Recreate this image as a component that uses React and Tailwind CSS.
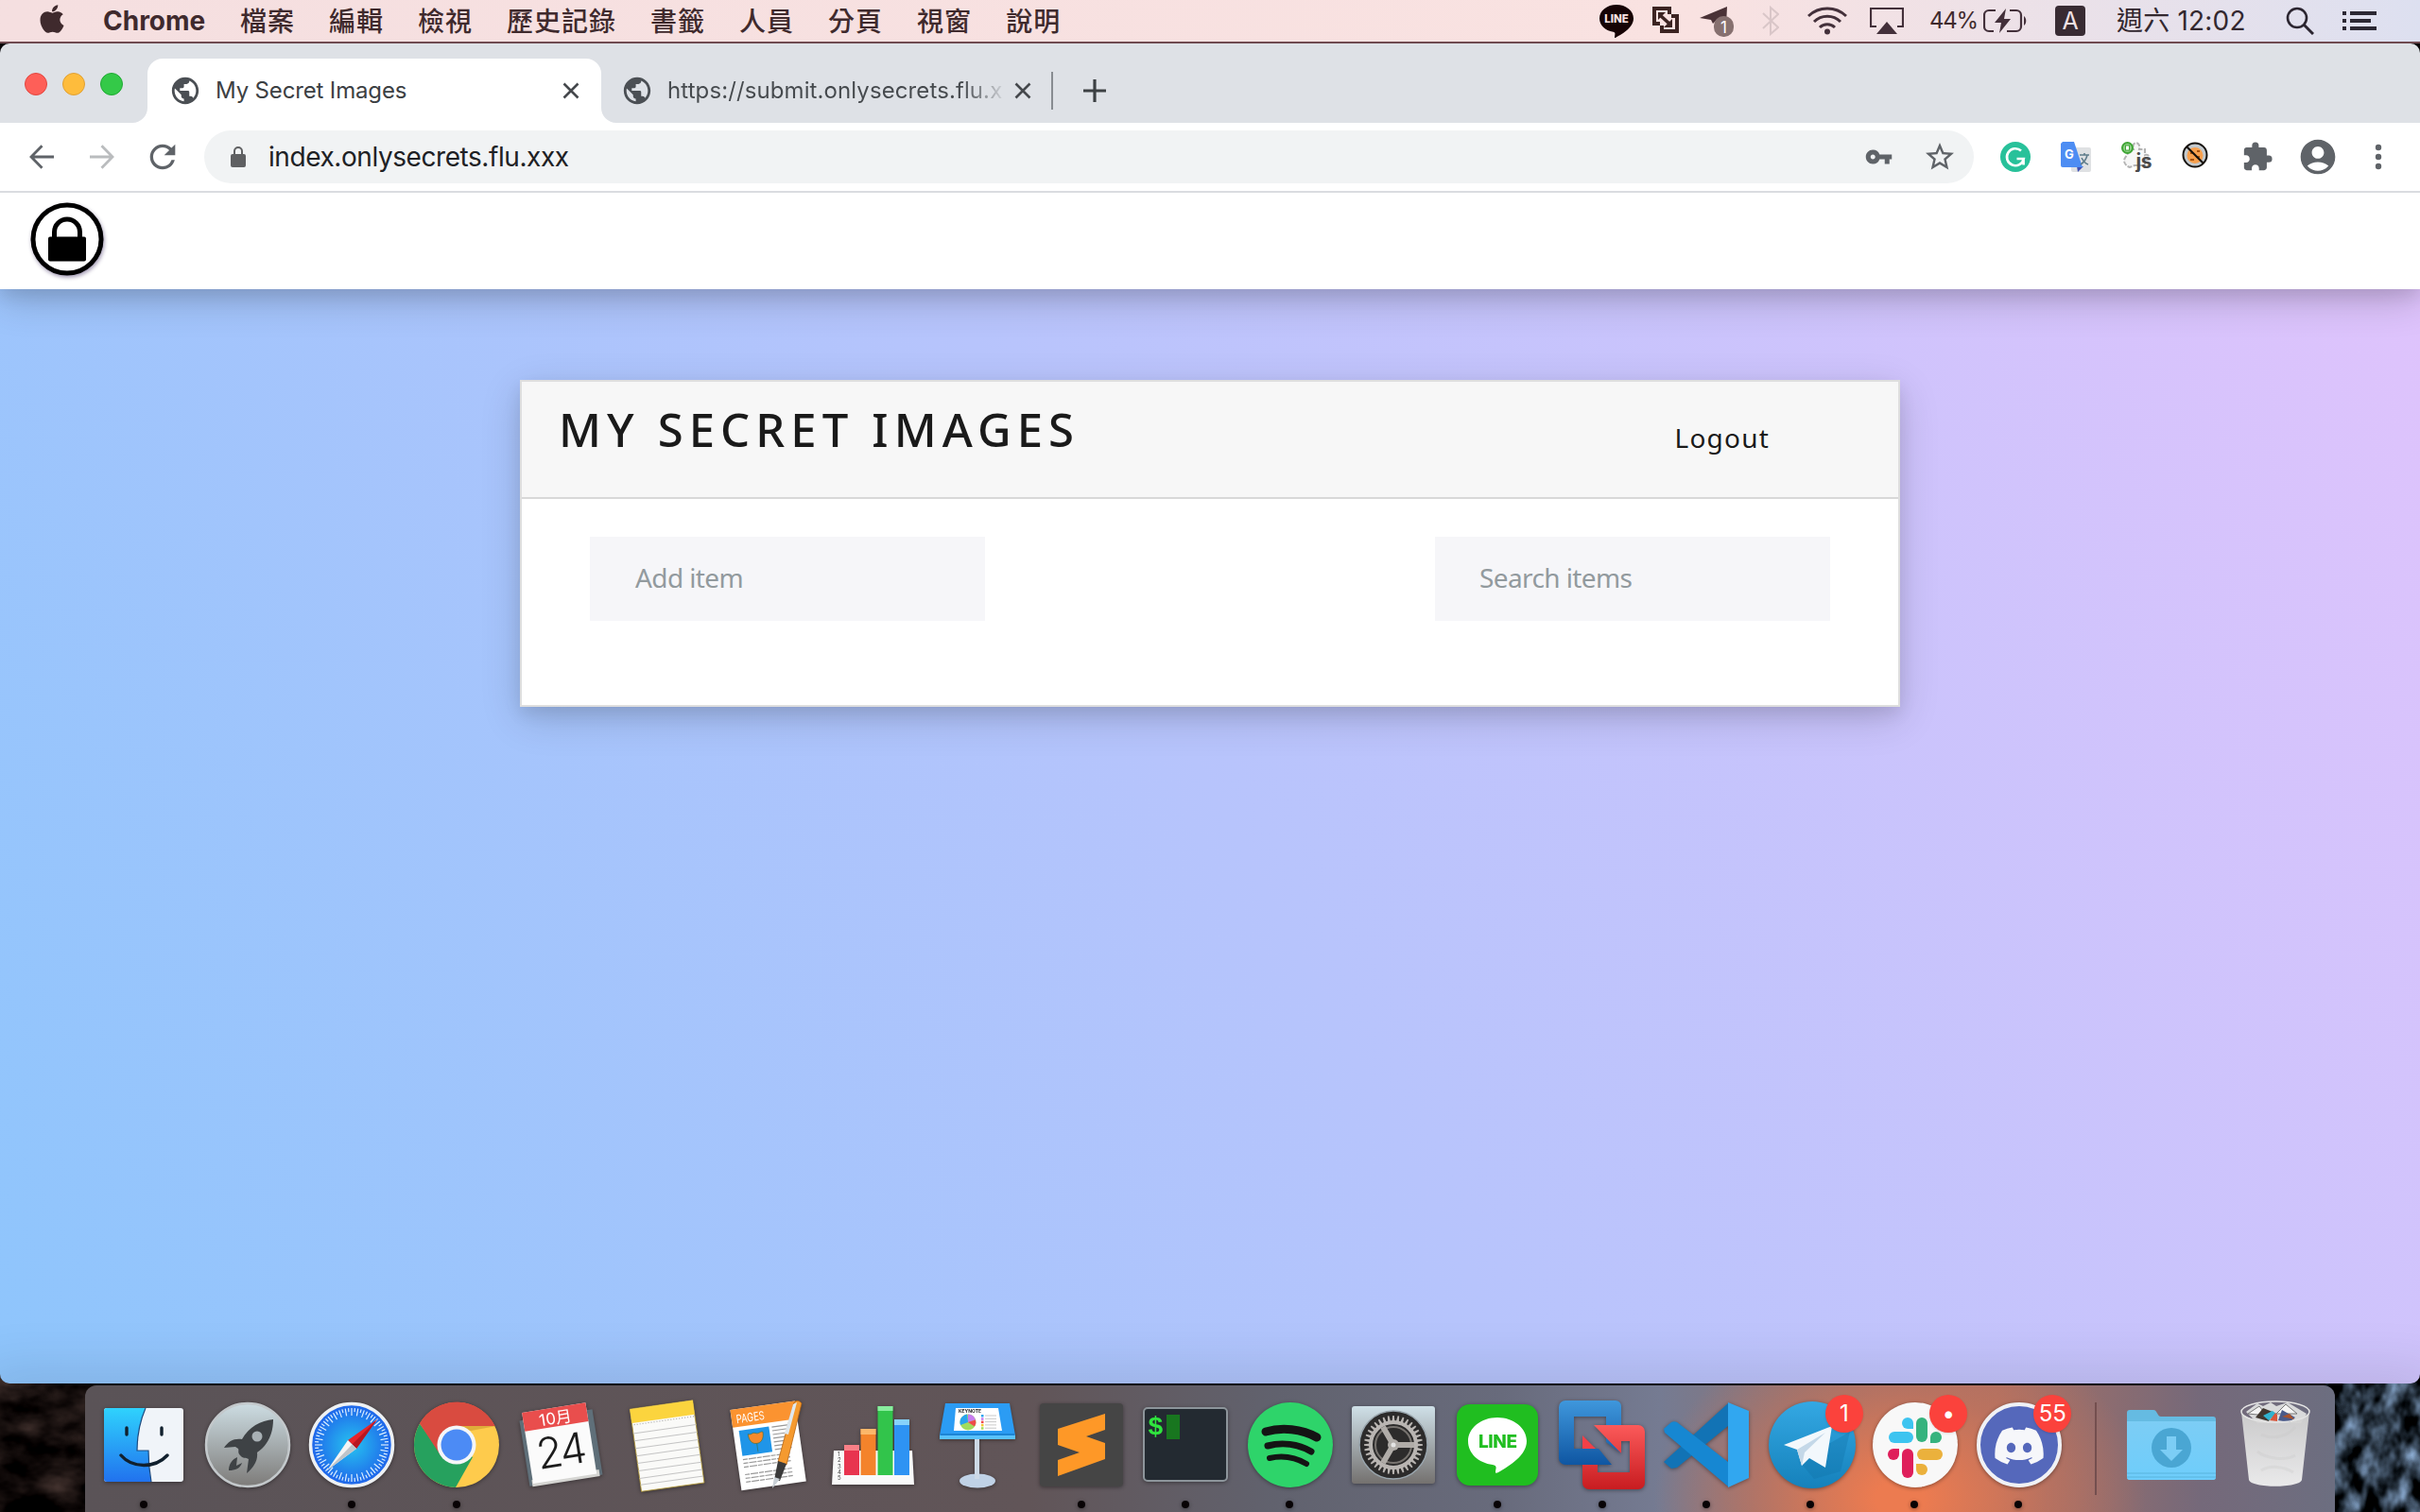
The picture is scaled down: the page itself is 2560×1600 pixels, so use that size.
import React from "react";
import { MdPublic, MdVpnKey, MdStarBorder, MdExtension, MdAccountCircle, MdRefresh } from "react-icons/md";
import { FaApple, FaDiscord } from "react-icons/fa";

const menus = ["檔案", "編輯", "檢視", "歷史記錄", "書籤", "人員", "分頁", "視窗", "說明"];

function MenuBar() {
  return (
    <header className="flex h-[46px] w-full items-center border-b-2 border-[#6f4a50] bg-gradient-to-r from-[#f5dfe0] via-[#f9e2e1] via-70% to-[#dde0f0] text-[28px] leading-none text-[#3f2a2d]">
      <div className="flex w-[109px] items-center pl-[40px]">
        <FaApple className="mb-[4px] h-[34px] w-[30px]" />
      </div>
      <span className="w-[145px] text-[28px] font-bold tracking-[0px]">Chrome</span>
      <nav className="flex gap-[36px] pt-[1px] font-medium tracking-[1px]">
        {menus.map((m) => (
          <span key={m}>{m}</span>
        ))}
      </nav>
      <div className="ml-auto flex h-full items-center">
        <svg width="36" height="36" viewBox="0 0 36 36" className="mr-[20px]">
          <path d="M18 1C8 1 0 7.300 0 15.500c0 7 6 13 14.500 14.200 1.500.3 2 1 1.900 2.200l-.4 3.600c0 .6.4.7 1 .4C22 33 36 26 36 15.500 36 7.300 28 1 18 1z" fill="#160304" />
          <text x="18" y="20" textAnchor="middle" fontSize="11.500" fontWeight="800" fill="#f9e2e1">LINE</text>
        </svg>
        <svg width="28" height="30" viewBox="0 0 28 30" className="mr-[22px]" fill="none" stroke="#3c2422" strokeWidth="4">
          <path d="M8 18H2V2h16v6" />
          <path d="M20 10h6v16H10v-6" />
          <path d="M8 9l11 10" strokeWidth="3.600" />
          <path d="M21 13v9h-9z" fill="#3c2422" stroke="none" />
          <path d="M6 6h8l-8 8z" fill="#3c2422" stroke="none" />
        </svg>
        <svg width="36" height="34" viewBox="0 0 36 34" className="mr-[30px]">
          <path d="M0 14L29 2l-1 20-10-6-4 4-2-4z" fill="#4a3236" />
          <rect x="15" y="12" width="21" height="22" rx="10" fill="#86706f" />
          <text x="25.500" y="29.500" textAnchor="middle" fontSize="17" fill="#fff">1</text>
        </svg>
        <svg width="18" height="32" viewBox="0 0 18 32" className="mr-[30px]" fill="none" stroke="#d9c6c8" strokeWidth="2">
          <path d="M1 8l16 15-8 7V2l8 7L1 24" />
        </svg>
        <svg width="42" height="30" viewBox="0 0 42 30" className="mr-[24px]" fill="none" stroke="#43303a" strokeWidth="3">
          <path d="M1 10a29 29 0 0 1 40 0M7 16a20 20 0 0 1 28 0M13 22a11.500 11.500 0 0 1 16 0" />
          <circle cx="21" cy="26.500" r="3" fill="#43303a" stroke="none" />
        </svg>
        <svg width="36" height="29" viewBox="0 0 36 29" className="mr-[27px]">
          <path d="M7 20H1V1h34v19h-6" fill="none" stroke="#43303a" strokeWidth="2.200" />
          <path d="M18 15l11 13H7z" fill="#43303a" />
        </svg>
        <span className="w-[57px] text-[24px] tracking-[-1.2px]">44%</span>
        <svg width="47" height="26" viewBox="0 0 47 26" className="mr-[29px]" fill="none" stroke="#43303a" strokeWidth="2.200">
          <path d="M13 2H6a5 5 0 0 0-5 5v12a5 5 0 0 0 5 5h5M28 2h7a5 5 0 0 1 5 5v12a5 5 0 0 1-5 5H25" />
          <path d="M43 8c3 2 3 8 0 10z" fill="#43303a" stroke="none" />
          <path d="M24 0L12 15h7l-2 11 12-15h-7z" fill="#43303a" stroke="none" />
        </svg>
        <span className="mr-[33px] flex h-[32px] w-[32px] items-center justify-center rounded-[4px] bg-[#382b33] text-[25px] text-[#f1e1e4]">A</span>
        <span className="w-[179px] whitespace-nowrap text-[28px] tracking-[0.2px] text-[#33282f]">週六 12:02</span>
        <svg width="30" height="30" viewBox="0 0 30 30" className="mr-[30px]" fill="none" stroke="#2b2530" strokeWidth="2.600">
          <circle cx="12" cy="12" r="10" />
          <path d="M19 19l10 10" strokeWidth="3" />
        </svg>
        <svg width="36" height="22" viewBox="0 0 36 22" className="mr-[46px]" fill="#2b2833">
          <path d="M0 1h4v4H0zM0 9h4v4H0zM0 17h4v4H0zM8 1h28v4H8zM8 9h22v4H8zM8 17h28v4H8z" />
        </svg>
      </div>
    </header>
  );
}

function Close() {
  return (
    <svg width="18" height="18" viewBox="0 0 18 18" stroke="#45484c" strokeWidth="2.600" className="shrink-0">
      <path d="M1.500 1.500l15 15M16.500 1.500l-15 15" />
    </svg>
  );
}

function Globe() {
  return <MdPublic className="-ml-[3px] h-[34px] w-[34px] shrink-0 text-[#4b4f54]" />;
}

function TabStrip() {
  return (
    <div className="flex h-[84px] items-end bg-[#dee1e6] text-[24px]">
      <div className="flex h-full w-[156px] shrink-0 items-start gap-[16px] pl-[26px] pt-[31px]">
        <i className="h-[24px] w-[24px] rounded-full border border-[#e2463f] bg-[#fe5f58]" />
        <i className="h-[24px] w-[24px] rounded-full border border-[#dfa034] bg-[#febc3c]" />
        <i className="h-[24px] w-[24px] rounded-full border border-[#1faa33] bg-[#34c948]" />
      </div>
      <svg width="16" height="16" className="-ml-[16px] shrink-0"><path d="M16 0v16H0A16 16 0 0 0 16 0z" fill="#fff" /></svg>
      <div className="flex h-[68px] w-[480px] items-center rounded-t-[16px] bg-white pl-[26px] pr-[23px]">
        <Globe />
        <span className="ml-[15px] flex-1 tracking-[-0.15px] text-[#3c4043]">My Secret Images</span>
        <Close />
      </div>
      <svg width="16" height="16" className="shrink-0"><path d="M0 0v16h16A16 16 0 0 1 0 0z" fill="#fff" /></svg>
      <div className="flex h-[68px] w-[460px] items-center pl-[8px] pr-[21px]">
        <Globe />
        <span className="ml-[15px] w-[354px] overflow-hidden whitespace-nowrap bg-gradient-to-r from-[#45494d] from-[88%] to-[#45494d20] bg-clip-text tracking-[0.100px] text-transparent">
          https://submit.onlysecrets.flu.xxx
        </span>
        <span className="ml-auto flex"><Close /></span>
      </div>
      <div className="flex h-[68px] items-center">
        <i className="h-[40px] w-[2px] bg-[#888c91]" />
        <svg width="24" height="24" viewBox="0 0 24 24" className="ml-[32px]" stroke="#3c4043" strokeWidth="3.200"><path d="M12 0v24M0 12h24" /></svg>
      </div>
    </div>
  );
}

function Toolbar() {
  return (
    <div className="flex h-[74px] items-center border-b-2 border-[#dadce0] bg-white text-[#5f6368]">
      <svg width="26" height="26" viewBox="0 0 26 26" className="ml-[31px]" fill="none" stroke="#5f6368" strokeWidth="2.800"><path d="M26 13H2M13.500 1.200L2 13l11.500 11.800" /></svg>
      <svg width="26" height="26" viewBox="0 0 26 26" className="ml-[38px]" fill="none" stroke="#babcbe" strokeWidth="2.800"><path d="M0 13h24M12.500 1.200L24 13 12.500 24.800" /></svg>
      <MdRefresh className="ml-[31px] h-[40px] w-[40px] text-[#5f6368]" />
      <div className="ml-[24px] flex h-[56px] w-[1872px] items-center rounded-full bg-[#f1f3f4] pl-[28px] pr-[18px]">
        <svg width="16" height="22" viewBox="0 0 16 22"><rect y="8" width="16" height="14" rx="2" fill="#5f6062" /><path d="M4 9V5a4 4 0 0 1 8 0v4" fill="none" stroke="#5f6062" strokeWidth="2" /></svg>
        <span className="ml-[24px] flex-1 text-[28px] tracking-[-0.430px] text-[#202124]">index.onlysecrets.flu.xxx</span>
        <MdVpnKey className="h-[30px] w-[31px]" />
        <MdStarBorder className="ml-[31px] h-[36px] w-[36px]" />
      </div>
      <svg width="32" height="32" viewBox="0 0 32 32" className="ml-[28px]">
        <circle cx="16" cy="16" r="16" fill="#28c19a" />
        <path d="M22 9.500a9 9 0 1 0 2.800 8.500H17.500M24.600 18v6.500" fill="none" stroke="#fff" strokeWidth="2.600" />
      </svg>
      <svg width="33" height="32" viewBox="0 0 33 32" className="ml-[32px]">
        <rect x="11" y="6" width="21" height="26" rx="2" fill="#dfe1e3" />
        <path d="M17 26h7l-6 6z" fill="#3f51b5" />
        <path d="M2 0h12l9 27H2a2 2 0 0 1-2-2V2z" fill="#4d8df3" />
        <text x="4" y="18" fontSize="13" fontWeight="700" fill="#fff">G</text>
        <path d="M20 14h10M25 12v2M28 14c-1 5-4 8-7 10M22 17c2 4 4 6 7 7" fill="none" stroke="#607d8b" strokeWidth="1.600" />
      </svg>
      <svg width="33" height="32" viewBox="0 0 33 32" className="ml-[31px]">
        <path d="M9 8h4c-3-9 8-9 6 0h6v6c6-2 6 7 0 5v6H14l-5 2c-6-2-7-7-5-10l2-3z" fill="#f7f7f7" stroke="#b4b4b4" strokeWidth="2" strokeDasharray="5 1.500" />
        <circle cx="6.500" cy="6.500" r="5.500" fill="#8fd086" stroke="#3fa535" strokeWidth="2" />
        <rect x="4.500" y="4" width="4" height="5" fill="#fff" stroke="#3fa535" />
        <text x="15.500" y="28" fontSize="21" fontWeight="700" fill="#4a4a4a" textLength="17">js</text>
      </svg>
      <svg width="28" height="28" viewBox="0 0 28 28" className="mb-[4px] ml-[31px]">
        <circle cx="14" cy="14" r="12.500" fill="#c4cace" stroke="#16110c" strokeWidth="2" />
        <circle cx="14" cy="14.500" r="8.500" fill="#f7a04e" />
        <path d="M9 12h3M16 10h3M9 19h4M15 16h4" stroke="#a9520c" strokeWidth="2" />
        <path d="M5 5l18 18" stroke="#16110c" strokeWidth="2.200" />
      </svg>
      <MdExtension className="ml-[35px] h-[34px] w-[34px]" />
      <MdAccountCircle className="ml-[25px] h-[44px] w-[44px]" />
      <svg width="8" height="28" viewBox="0 0 8 28" className="ml-[38px]" fill="#5f6368"><circle cx="4" cy="4" r="3.200" /><circle cx="4" cy="14" r="3.200" /><circle cx="4" cy="24" r="3.200" /></svg>
    </div>
  );
}

function Page() {
  return (
    <main className="relative flex h-[1260px] flex-col overflow-hidden bg-[linear-gradient(62deg,#8ec5fc_0%,#e0c3fc_100%)] font-['Noto_Sans',sans-serif]">
      <div className="flex h-[102px] shrink-0 items-center bg-white pl-[30px] shadow-[0_8px_16px_0_rgba(0,0,0,0.08),0_12px_40px_0_rgba(0,0,0,0.19)]">
        <svg width="82" height="82" viewBox="0 0 82 82" className="mt-[-5px] drop-shadow-[1px_2px_2px_rgba(40,20,80,0.45)]">
          <circle cx="41" cy="41" r="36" fill="#fff" stroke="#000" strokeWidth="5" />
          <path d="M27.500 42V33.500a13.500 13.500 0 0 1 27 0V42" fill="none" stroke="#000" strokeWidth="5" />
          <rect x="21" y="38.500" width="40" height="26" rx="2" fill="#000" />
        </svg>
      </div>
      <section className="mx-auto mt-[96px] h-[346px] w-[1460px] border-2 border-[#dedede] bg-white shadow-[0_8px_16px_0_rgba(0,0,0,0.08),0_12px_40px_0_rgba(0,0,0,0.16)]">
        <div className="flex h-[124px] justify-between border-b-2 border-[#d8d8d8] bg-[#f7f7f7] pl-[39px] pr-[136px] text-[#1a1a1a]">
          <h1 className="mt-[14px] text-[49px] font-medium leading-[72px] tracking-[6.100px]">MY SECRET IMAGES</h1>
          <a className="mt-[39px] text-[28px] leading-[40px] tracking-[1.200px]">Logout</a>
        </div>
        <div className="flex justify-between px-[72px] pt-[40px] text-[28px] tracking-[-0.600px] text-[#929a9e]">
          <div className="flex h-[89px] w-[418px] items-center bg-[#f6f6f9] pb-[3px] pl-[48px]">Add item</div>
          <div className="flex h-[89px] w-[418px] items-center bg-[#f6f6f9] pb-[3px] pl-[47px]">Search items</div>
        </div>
      </section>
      <footer className="mt-auto h-0 shrink-0 shadow-[0_8px_16px_0_rgba(0,0,0,0.1),0_12px_60px_20px_rgba(0,0,0,0.15)]" />
    </main>
  );
}

const ticks = Array.from({ length: 72 }, (_, i) => i * 5);
const teeth = Array.from({ length: 36 }, (_, i) => i * 10);

const apps = [
  { name: "Finder", open: true, art: (
    <>
      <rect x="13" y="24" width="84" height="78" rx="3" fill="#f0f4f9" />
      <path d="M16 24h41c-6 14-9 30-9 45h12c0 12 1 22 3 33H16a3 3 0 0 1-3-3V27a3 3 0 0 1 3-3z" fill="url(#finder)" />
      <path d="M57 24c-6 14-9 30-9 45h12c0 12 1 22 3 33" fill="none" stroke="#1d4b80" strokeWidth="1.200" />
      <path d="M37 45v7M74 45v7M31 74c12 14 36 14 49 0" fill="none" stroke="#11202e" strokeWidth="3.400" strokeLinecap="round" />
    </>) },
  { name: "Launchpad", art: (
    <>
      <circle cx="55" cy="63" r="44" fill="url(#launch)" stroke="#c3c8cb" strokeWidth="2.500" />
      <path d="M82 36c-13 1-26 8-33 21-9-1-14 2-19 9l12-1 3 2c1 2-1 4 2 7 3 4 6 2 9 4l-2 15c7-6 12-13 11-22C78 62 82 49 82 36z" fill="#3e4245" />
      <circle cx="65" cy="54" r="5.500" fill="#a8b0b4" />
      <path d="M44 76c-5 2-9 7-9 14 7 0 12-2 14-8l-6 3z" fill="#3e4245" />
    </>) },
  { name: "Safari", open: true, art: (
    <>
      <circle cx="55" cy="63" r="43.500" fill="url(#safari)" stroke="#eef1f3" strokeWidth="3.500" />
      {ticks.map((a) => <path key={a} d={a % 10 ? "M55 24v4" : "M55 24v8"} transform={`rotate(${a} 55 63)`} stroke="#dcefff" strokeWidth="1.200" />)}
      <path d="M82 36L51 58l9 9z" fill="#e5252b" /><path d="M82 36L60 67l-4.500-4.500z" fill="#b81620" />
      <path d="M29 90l22-32 9 9z" fill="#f4f4f4" /><path d="M29 90l31-23-4.500-4.500z" fill="#bfc4c9" />
    </>) },
  { name: "Chrome", open: true, art: (
    <>
      <circle cx="55" cy="63" r="45" fill="#fecb4c" />
      <path d="M55 63L16 40.500A45 45 0 0 1 95.500 43H55z" fill="#d94b40" />
      <path d="M16 40.500A45 45 0 0 0 54 108l18-32-17-13-17 8z" fill="#26a15e" />
      <path d="M16 40.500L38 74l2-20 15-11h40.500A45 45 0 0 0 16 40.500z" fill="#d94b40" />
      <path d="M70 48l27-5H55z" fill="#c99a2e" opacity=".6" />
      <circle cx="55" cy="63" r="20.500" fill="#f5f6f8" /><circle cx="55" cy="63" r="16.500" fill="#4c8bf5" />
    </>) },
  { name: "Calendar", art: (
    <g transform="rotate(-9 55 63)">
      <path d="M16 31h78v70H16z" fill="#5f6f79" /><path d="M19 95h72v7H19z" fill="#d5d5d2" />
      <rect x="20" y="23" width="68" height="76" fill="#fbfbfb" /><path d="M20 23h68v20H20z" fill="#e94e4d" />
      <text x="54" y="40" textAnchor="middle" fontSize="17" fill="#fff">10月</text>
      <text x="54" y="85" textAnchor="middle" fontSize="45" fontWeight="300" letterSpacing="-2" fill="#1c1c1c">24</text>
    </g>) },
  { name: "Notes", art: (
    <g transform="translate(3 0) rotate(-8 55 63)">
      <rect x="21" y="20" width="67" height="88" fill="#fafaf8" stroke="#b59b37" strokeWidth=".8" />
      <path d="M21 20h67v15H21z" fill="#fbd43e" />
      <path d="M23 37h64" stroke="#999" strokeDasharray="1 2" />
      {[46, 54, 62, 70, 78, 86, 94, 101].map((y) => <path key={y} d={`M21 ${y}h67`} stroke="#c4c4c4" />)}
    </g>) },
  { name: "Pages", art: (
    <g transform="translate(1 0)">
      <g transform="rotate(-8 52 63)">
        <rect x="19" y="21" width="69" height="86" fill="#fff" /><path d="M19 21h69v19H19z" fill="#fb9330" />
        <text x="24" y="36" fontSize="12.500" fill="#fff" textLength="30" lengthAdjust="spacingAndGlyphs">PAGES</text>
        <rect x="25" y="44" width="32" height="27" fill="#1f95e8" />
        <path d="M34 49c3 2 5-2 8 0s6-2 8 0c0 8-4 11-8 11-5 0-8-4-8-11zM42 60v9" fill="#f58a2c" stroke="#3b6d42" strokeWidth=".6" />
        {[45, 49, 53, 57, 61, 65, 69].map((y) => <path key={y} d={`M60 ${y}h18`} stroke="#999" strokeWidth="1.200" />)}
        {[75, 79, 83, 91, 95, 99].map((y) => <path key={y} d={`M25 ${y}h50`} stroke="#999" strokeWidth="1.200" strokeDasharray="5 1 8 1" />)}
      </g>
      <path d="M81 18q4-4 8 1L73 84l-9-3z" fill="#f59a2f" stroke="#b86511" strokeWidth=".8" />
      <path d="M80 20l4-2-9 34-4-1z" fill="#dfe8ef" /><path d="M64 80l9 3-7 18-6-1z" fill="#3a3a3a" /><path d="M60 97l6 2-8 10z" fill="#c9d0d6" />
    </g>) },
  { name: "Numbers", art: (
    <g transform="translate(1 0)">
      <path d="M13 69h83l2 36H11z" fill="#f9f9f9" />
      {[1, 2, 3, 4, 5].map((n, i) => <text key={n} x="17" y={75 + i * 6.300} fontSize="6" fill="#444">{n}</text>)}
      <path d="M24 63h16v32H24z" fill="#e8344f" /><path d="M24 63h16v6H24z" fill="#f98087" />
      <path d="M41.500 46h16v49h-16z" fill="#f4832b" /><path d="M41.500 46h16v6h-16z" fill="#fcb76a" />
      <path d="M59.500 22h16v73h-16z" fill="#32c44b" /><path d="M59.500 22h16v5h-16z" fill="#88ee9e" />
      <path d="M77 36h16v59H77z" fill="#2e93f3" /><path d="M77 36h16v6H77z" fill="#87d2fb" />
    </g>) },
  { name: "Keynote", art: (
    <g transform="translate(-1 0)">
      <ellipse cx="56" cy="101" rx="19" ry="7.500" fill="#c0d2e6" /><path d="M53 54h5v45h-5z" fill="#cdd9e6" />
      <path d="M22 19h68l6 34H16z" fill="#2b9cf4" /><path d="M16 53h80v4H16z" fill="#59c2fb" /><path d="M17 52h78" stroke="#0e6db5" />
      <path d="M33 24h45l4 24H31z" fill="#fff" />
      <text x="36" y="29" fontSize="5" fontWeight="700" fill="#222" textLength="24">KEYNOTE</text>
      <circle cx="46" cy="39" r="8.500" fill="#a2dc5d" /><path d="M46 39l-8 3a8.500 8.500 0 0 1 7-11.400z" fill="#2aa4ee" /><path d="M46 39V30.500a8.500 8.500 0 0 1 8 6z" fill="#c77cf0" /><path d="M46 39l8-2.500a8 8 0 0 1-1 7z" fill="#ef4b4b" />
      {["#2aa4ee", "#c77cf0", "#ef4b4b", "#f5c72f", "#a2dc5d"].map((c, i) => <g key={c}><rect x="60" y={31 + i * 3.300} width="2.500" height="2.500" fill={c} /><path d={`M64 ${32 + i * 3.300}h12`} stroke="#c8c8c8" /></g>)}
    </g>) },
  { name: "Sublime Text", open: true, art: (
    <>
      <rect x="11" y="19" width="88" height="88" rx="4" fill="#454545" />
      <path d="M53 71l20 7 7-9z" fill="#e27b12" />
      <path d="M30 46l50-16v17L60 54l20 7v17L30 96V79l23-8-23-8z" fill="#fe9827" />
    </>) },
  { name: "Terminal", open: true, art: (
    <>
      <rect x="11" y="24" width="88" height="77" rx="4" fill="#232a31" stroke="#8d959b" strokeWidth="2" />
      <text x="15" y="52" fontSize="28" fontWeight="700" fontFamily="Liberation Mono" fill="#2fe53e">$</text>
      <rect x="35" y="31" width="14" height="26" fill="#18761f" />
    </>) },
  { name: "Spotify", open: true, art: (
    <>
      <circle cx="56" cy="63" r="45" fill="#2ed46a" />
      <g fill="none" stroke="#141414" strokeLinecap="round"><path d="M30 49c17-5 38-3 54 6" strokeWidth="9" /><path d="M32 64c15-4 32-2 46 6" strokeWidth="7" /><path d="M34 77c13-3 27-1 39 6" strokeWidth="6" /></g>
    </>) },
  { name: "System Preferences", art: (
    <>
      <rect x="11" y="22" width="88" height="82" rx="3" fill="url(#prefs)" />
      <circle cx="55" cy="63" r="36" fill="#2c2b2b" stroke="#99a5ad" strokeWidth="1.500" />
      {teeth.map((a) => <path key={a} d="M53.500 38l.7-6h1.600l.7 6z" transform={`rotate(${a} 55 63)`} fill="#b9b5b2" />)}
      <circle cx="55" cy="63" r="24" fill="none" stroke="#b9b5b2" strokeWidth="4" />
      <circle cx="55" cy="63" r="19" fill="none" stroke="#77736f" strokeWidth="2" />
      <path d="M55 63h22M55 63L44 44M55 63L44 82" stroke="#b0aca8" strokeWidth="6" />
      <circle cx="55" cy="63" r="6" fill="#b0aca8" /><circle cx="55" cy="63" r="2.500" fill="#e4e4e4" />
    </>) },
  { name: "LINE", open: true, art: (
    <>
      <rect x="12" y="20" width="86" height="86" rx="14" fill="#20be20" />
      <path d="M55 34c-17 0-31 11-31 25 0 13 11 23 26 25 3 .5 4 2 3.500 4l-.5 3c-.2 2 1 2 3 1 12-7 30-18 30-33 0-14-14-25-31-25z" fill="#fff" />
      <text x="55.500" y="66" textAnchor="middle" fontSize="19" fontWeight="800" fill="#20be20" textLength="41">LINE</text>
    </>) },
  { name: "VMware Fusion", open: true, art: (
    <g transform="translate(-1 0)">
      <path fillRule="evenodd" d="M17 16h53a6 6 0 0 1 6 6v50L60 60V33H26v34h26l14 17H17a7 7 0 0 1-7-7V23a7 7 0 0 1 7-7z" fill="url(#vmb)" />
      <path fillRule="evenodd" d="M47 42h47a7 7 0 0 1 7 7v54a7 7 0 0 1-7 7H42a7 7 0 0 1-7-7V84h16v8h34V59H76V72z" fill="url(#vmr)" />
      <path d="M35 53l14 14H35z" fill="#f24048" />
    </g>) },
  { name: "Visual Studio Code", open: true, art: (
    <>
      <path d="M10 81l8 7 6-1 54-44V19z" fill="#1273b5" />
      <path d="M10 46l8-7c2-1 4-1 6 0l54 42v26L11 50z" fill="#1687d2" />
      <path d="M78 18l22 9v71l-22 10z" fill="#31a7f0" />
    </>) },
  { name: "Telegram", open: true, badge: "1", art: (
    <>
      <circle cx="57" cy="63" r="46" fill="url(#tg)" />
      <path d="M43 80l16 19 28-8 10-42z" fill="#1272aa" opacity=".35" />
      <path d="M27 63l51-20-7 44-17-10-8 8-5-17z" fill="#f3f8fc" /><path d="M41 68l30-18-22 21-3 14z" fill="#c4d8e8" />
    </>) },
  { name: "Slack", open: true, badge: "•", art: (
    <>
      <circle cx="56" cy="63" r="45" fill="#f8f8f8" />
      <g transform="translate(-1 0)">
        <g strokeWidth="12" strokeLinecap="round"><path d="M35 55h14" stroke="#3dc4f0" /><path d="M64 40v14" stroke="#36b37e" /><path d="M65 73h15" stroke="#ebb13c" /><path d="M49 73v19" stroke="#df1f5b" /></g>
        <path d="M55 46h-6a6 6 0 1 1 6-6z" fill="#3dc4f0" /><path d="M73 61v-6a6 6 0 1 1 6 6z" fill="#36b37e" /><path d="M58 83h6a6 6 0 1 1-6 6z" fill="#ebb13c" /><path d="M40 67v6a6 6 0 1 1-6-6z" fill="#df1f5b" />
      </g>
    </>) },
  { name: "Discord", open: true, badge: "55", art: (
    <>
      <circle cx="56" cy="63" r="43" fill="#5568bb" stroke="#f0f1f5" strokeWidth="4" />
      <g transform="translate(28 36)"><FaDiscord size={56} color="#f6f7fa" /></g>
    </>) },
];

function Slot({ app }) {
  return (
    <div className="relative h-[134px] w-[110.200px] shrink-0">
      <svg width="110" height="134" viewBox="0 0 110 134" role="img" aria-label={app.name} className="drop-shadow-[0_1px_2px_rgba(0,0,0,0.4)]">
        {app.art}
        {app.open && <circle cx="55" cy="126" r="4" fill="#080305" />}
      </svg>
      {app.badge && (
        <span className="absolute left-[71px] top-[10px] flex h-[40px] w-[40px] items-center justify-center rounded-full bg-[#fb423c] text-[24px] leading-none text-white shadow">{app.badge}</span>
      )}
    </div>
  );
}

function Defs() {
  const lin = (id, a, b) => (
    <linearGradient key={id} id={id} x1="0" y1="0" x2="0" y2="1"><stop stopColor={a} /><stop offset="1" stopColor={b} /></linearGradient>
  );
  return (
    <svg width="0" height="0" className="absolute">
      <defs>
        {lin("finder", "#2fd2fd", "#2172ee")}
        {lin("launch", "#cddde3", "#7d7b79")}
        {lin("prefs", "#cfe0e8", "#74716f")}
        {lin("vmb", "#3f97dc", "#0f56a2")}
        {lin("vmr", "#fb5a5a", "#c81c20")}
        {lin("tg", "#34a8e3", "#1581bb")}
        {lin("folder", "#7ccdf5", "#6ecdfb")}
        {lin("bin", "#cfcfcf", "#f0f0f0")}
        <radialGradient id="safari"><stop stopColor="#26c3f0" /><stop offset="1" stopColor="#1f63ea" /></radialGradient>
      </defs>
    </svg>
  );
}

function Dock() {
  return (
    <div className="flex h-[134px] w-[2380px] rounded-t-[12px] bg-[radial-gradient(ellipse_260px_190px_at_1920px_120px,#ec7b50_10%,#c4735cb0_60%,transparent_100%),linear-gradient(90deg,#5a5357_0%,#615558_42%,#61626e_53%,#686b7c_63%,#757b92_70%,#8a7478_76%,#a87064_85%,#75697a_94%,#6c6e80_100%)] pl-[7px]">
      {apps.map((a) => <Slot key={a.name} app={a} />)}
      <i className="ml-[25px] mt-[18px] h-[98px] w-[2px] shrink-0 bg-[#744f4f]" />
      <svg width="240" height="134" viewBox="0 0 240 134" className="ml-[25px] shrink-0">
        <g transform="translate(-1 0)">
          <path d="M8 29a3 3 0 0 1 3-3h25c4 0 4 7 8 7h55a3 3 0 0 1 3 3v61a3 3 0 0 1-3 3H11a3 3 0 0 1-3-3z" fill="#65bbe2" />
          <path d="M8 38h94v59a3 3 0 0 1-3 3H11a3 3 0 0 1-3-3z" fill="url(#folder)" />
          <path d="M8 93h94M8 97h94" stroke="#58b4dd" />
          <circle cx="55" cy="66" r="21" fill="#4aa6d3" /><path d="M50 54h10v14h7L55 80 43 68h7z" fill="#7ccdf5" />
        </g>
        <g transform="translate(-1 0)">
          <path d="M134 28l12-9 6 3 8-4 6 4 12-4 20 12-6 10h-46z" fill="#d9dadb" />
          <path d="M136 30l12-8 8 10zM166 30l10-10 12 10z" fill="#f4f4f4" stroke="#777" />
          <path d="M129 28c8 14 64 14 72 0l-8 72c-2 9-54 9-56 0z" fill="url(#bin)" opacity=".95" />
          <path d="M144 34l8-10 10 4-4 10z" fill="#40372f" /><path d="M152 32l10-5 4 3-8 7z" fill="#31b3ce" /><path d="M159 37l6-8 2 2v7z" fill="#d9573b" /><path d="M168 37l4-11 14 8-6 5z" fill="#4a5a8a" /><path d="M172 33l8-3 5 6z" fill="#a8522c" />
          <path d="M150 52c12 6 28 2 36-8M146 70c10 8 30 10 40 4M150 90c10-6 24-4 34 2" stroke="#c6c6c6" strokeWidth="3" fill="none" opacity=".3" />
          <ellipse cx="165" cy="28" rx="36" ry="11" fill="none" stroke="#e4e4e4" strokeWidth="1.500" />
        </g>
      </svg>
    </div>
  );
}

function Wallpaper() {
  return (
    <svg width="2560" height="150" className="absolute bottom-0 left-0">
      <filter id="rock" x="0" y="0" width="100%" height="100%" colorInterpolationFilters="sRGB">
        <feTurbulence type="fractalNoise" baseFrequency="0.018 0.03" numOctaves="4" seed="4" />
        <feColorMatrix values="0.500 0 0 0 -0.160  0.400 0 0 0 -0.140  0.370 0 0 0 -0.130  0 0 0 0 1" />
      </filter>
      <filter id="bark" x="0" y="0" width="100%" height="100%" colorInterpolationFilters="sRGB">
        <feTurbulence type="fractalNoise" baseFrequency="0.050 0.035" numOctaves="3" seed="9" />
        <feColorMatrix values="1.000 0 0 0 -0.330  1.200 0 0 0 -0.380  1.450 0 0 0 -0.450  0 0 0 0 1" />
      </filter>
      <rect width="2560" height="150" fill="#070608" />
      <rect width="100" height="150" filter="url(#rock)" />
      <rect x="2460" width="100" height="150" filter="url(#bark)" />
    </svg>
  );
}

export default function App() {
  return (
    <div className="relative h-[1600px] w-[2560px] overflow-hidden bg-[#070608] font-[Inter,'Noto_Sans_CJK_TC',sans-serif]">
      <Defs />
      <Wallpaper />
      <div className="relative flex h-full flex-col items-center">
        <MenuBar />
        <div className="mb-[2px] w-full overflow-hidden rounded-t-[10px] rounded-b-[10px]">
          <TabStrip />
          <Toolbar />
          <Page />
        </div>
        <Dock />
      </div>
    </div>
  );
}
